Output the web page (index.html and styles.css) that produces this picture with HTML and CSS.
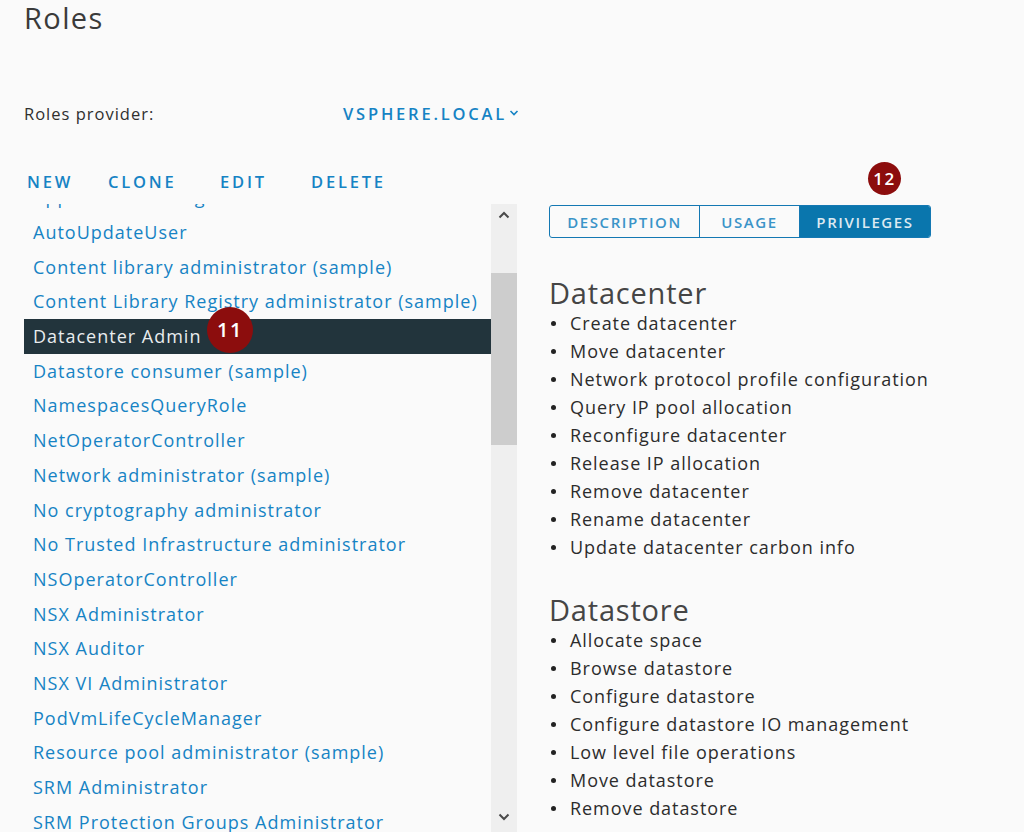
FILE: index.html
```html
<!DOCTYPE html>
<html>
<head>
<meta charset="utf-8">
<link rel="stylesheet" href="styles.css">
</head>
<body>
<div class="page">
  <h1 class="title">Roles</h1>
  <div class="provider">
    <span class="provider-label">Roles provider:</span>
    <span class="provider-value">VSPHERE.LOCAL<svg class="caret" width="10" height="8" viewBox="0 0 10 8"><polyline points="1.5,2 5,5.5 8.5,2" fill="none" stroke="#1683c4" stroke-width="1.6"/></svg></span>
  </div>
  <div class="toolbar">
    <span class="btn">NEW</span>
    <span class="btn">CLONE</span>
    <span class="btn">EDIT</span>
    <span class="btn">DELETE</span>
  </div>
  <div class="main">
    <div class="list-panel">
      <div class="list-view">
        <ul class="roles">
          <li class="role">Application Manager</li>
          <li class="role">AutoUpdateUser</li>
          <li class="role">Content library administrator (sample)</li>
          <li class="role">Content Library Registry administrator (sample)</li>
          <li class="role selected">Datacenter Admin<span class="badge badge-lg">11</span></li>
          <li class="role">Datastore consumer (sample)</li>
          <li class="role">NamespacesQueryRole</li>
          <li class="role">NetOperatorController</li>
          <li class="role">Network administrator (sample)</li>
          <li class="role">No cryptography administrator</li>
          <li class="role">No Trusted Infrastructure administrator</li>
          <li class="role">NSOperatorController</li>
          <li class="role">NSX Administrator</li>
          <li class="role">NSX Auditor</li>
          <li class="role">NSX VI Administrator</li>
          <li class="role">PodVmLifeCycleManager</li>
          <li class="role">Resource pool administrator (sample)</li>
          <li class="role">SRM Administrator</li>
          <li class="role">SRM Protection Groups Administrator</li>
        </ul>
      </div>
      <div class="scrollbar">
        <div class="sb-btn"><svg width="12" height="8" viewBox="0 0 12 8"><polyline points="1.5,6.5 6,2 10.5,6.5" fill="none" stroke="#4a4a4a" stroke-width="2"/></svg></div>
        <div class="sb-track"><div class="sb-thumb"></div></div>
        <div class="sb-btn sb-down"><svg width="12" height="8" viewBox="0 0 12 8"><polyline points="1.5,1.5 6,6 10.5,1.5" fill="none" stroke="#4a4a4a" stroke-width="2"/></svg></div>
      </div>
    </div>
    <div class="detail">
      <span class="badge badge-sm">12</span>
      <div class="tabs">
        <span class="tab">DESCRIPTION</span>
        <span class="tab">USAGE</span>
        <span class="tab active">PRIVILEGES</span>
      </div>
      <h2 class="group-title first">Datacenter</h2>
      <ul class="privs">
        <li>Create datacenter</li>
        <li>Move datacenter</li>
        <li>Network protocol profile configuration</li>
        <li>Query IP pool allocation</li>
        <li>Reconfigure datacenter</li>
        <li>Release IP allocation</li>
        <li>Remove datacenter</li>
        <li>Rename datacenter</li>
        <li>Update datacenter carbon info</li>
      </ul>
      <h2 class="group-title">Datastore</h2>
      <ul class="privs">
        <li>Allocate space</li>
        <li>Browse datastore</li>
        <li>Configure datastore</li>
        <li>Configure datastore IO management</li>
        <li>Low level file operations</li>
        <li>Move datastore</li>
        <li>Remove datastore</li>
      </ul>
    </div>
  </div>
</div>
</body>
</html>
```
FILE: styles.css
```css
html, body {
  margin: 0;
  padding: 0;
  background: #fafafa;
  overflow: hidden;
}
body {
  font-family: "Open Sans", Lato, sans-serif;
  color: #333;
  width: 1024px;
  height: 832px;
}
.page {
  padding-left: 24px;
}
.title {
  margin: 0;
  height: 36px;
  line-height: 36px;
  font-size: 29px;
  font-weight: 400;
  letter-spacing: 1.4px;
  color: #3a3a3a;
}
.provider {
  display: flex;
  align-items: center;
  height: 24px;
  margin-top: 65px;
  font-size: 16.5px;
}
.provider-label {
  width: 319px;
  color: #2f2f2f;
  letter-spacing: 1px;
}
.provider-value {
  display: flex;
  align-items: center;
  color: #1683c4;
  font-weight: 600;
  letter-spacing: 2.8px;
}
.caret {
  margin-left: 2px;
}
.toolbar {
  display: grid;
  grid-template-columns: 81px 112px 91px auto;
  height: 24px;
  line-height: 24px;
  margin-top: 45px;
  padding-left: 3px;
}
.btn {
  font-size: 16.5px;
  font-weight: 600;
  letter-spacing: 2.8px;
  color: #1683c4;
}
.main {
  display: flex;
  margin-top: 10px;
}
.list-panel {
  display: flex;
  width: 493px;
  height: 628px;
}
.list-view {
  flex: 1;
  overflow: hidden;
}
.roles {
  list-style: none;
  margin: -23.7px 0 0 0;
  padding: 0;
}
.role {
  position: relative;
  height: 34.7px;
  line-height: 34.7px;
  padding-left: 9px;
  font-size: 18px;
  letter-spacing: 1px;
  color: #1683c4;
  white-space: nowrap;
}
.role.selected {
  background: #22343c;
  color: #e9ecee;
}
.badge {
  position: absolute;
  display: flex;
  align-items: center;
  justify-content: center;
  border-radius: 50%;
  background: #8c0d0d;
  color: #fff;
  letter-spacing: 1.5px;
}
.badge-lg {
  width: 46px;
  height: 46px;
  left: 183px;
  top: -12px;
  font-size: 20px;
  font-weight: 600;
  line-height: 46px;
}
.badge-sm {
  width: 33px;
  height: 33px;
  left: 319px;
  top: -42px;
  font-size: 17px;
  font-weight: 600;
  line-height: 33px;
}
.scrollbar {
  width: 26px;
  display: flex;
  flex-direction: column;
  background: #efefef;
}
.sb-btn {
  height: 22px;
  display: flex;
  align-items: center;
  justify-content: center;
  flex: none;
}
.sb-down {
  margin-bottom: 4px;
}
.sb-track {
  flex: 1;
  padding-top: 47px;
}
.sb-thumb {
  height: 172px;
  background: #cdcdcd;
}
.detail {
  position: relative;
  margin-left: 32px;
  padding-top: 1px;
}
.tabs {
  display: grid;
  grid-template-columns: 149px 100px 131px;
  width: 380px;
  height: 31px;
  border: 1px solid #1478b3;
  border-radius: 3px;
  overflow: hidden;
}
.tab {
  display: flex;
  align-items: center;
  justify-content: center;
  font-size: 15px;
  font-weight: 600;
  letter-spacing: 1.6px;
  color: #3a94c8;
}
.tab + .tab {
  border-left: 1px solid #1478b3;
}
.tab.active {
  background: #0a76ad;
  color: #dce9f1;
}
.group-title {
  margin: 33px 0 0 0;
  height: 32px;
  line-height: 32px;
  font-size: 29px;
  font-weight: 400;
  letter-spacing: 0.8px;
  color: #454545;
}
.group-title.first {
  margin-top: 39px;
}
.privs {
  list-style: none;
  margin: 0;
  padding: 0;
}
.privs li {
  display: flex;
  align-items: center;
  height: 28px;
  font-size: 18px;
  letter-spacing: 0.95px;
  color: #2c2c2c;
  white-space: nowrap;
}
.privs li::before {
  content: "";
  width: 5px;
  height: 5px;
  border-radius: 50%;
  background: #222;
  margin: 0 14px 0 2px;
  flex: none;
}
```
